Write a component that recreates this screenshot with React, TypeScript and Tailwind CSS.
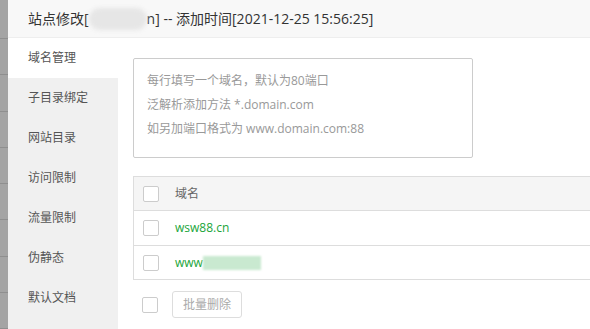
import React from "react";

const tabs = ["域名管理", "子目录绑定", "网站目录", "访问限制", "流量限制", "伪静态", "默认文档"];

function Checkbox() {
  return <span className="block w-4 h-4 border border-[#cccccc] rounded-[2px] bg-white shrink-0" />;
}

export default function App() {
  const font = { fontFamily: '"Open Sans", "Noto Sans CJK SC", sans-serif' };
  return (
    <div className="w-[590px] h-[329px] overflow-hidden flex bg-white" style={font}>
      {/* backdrop strip */}
      <div className="w-2 shrink-0 bg-[#a4a4a4] flex flex-col">
        <div className="h-[41px] border-b border-[#8f8f8f]" />
        {Array.from({ length: 8 }).map((_, i) => (
          <div key={i} className="h-[38px] border-b border-[#8f8f8f]" />
        ))}
      </div>

      <div className="flex-1 flex flex-col min-w-0">
        {/* Title */}
        <div className="h-[38px] shrink-0 bg-[#f8f8f8] border-b border-[#eeeeee] flex items-center pl-5 text-[14px] text-[#333333]">
          <span>站点修改[</span>
          <span className="w-[58px] h-[22px] bg-[#e6e6e6] blur-[2px] rounded-full" />
          <span>n] -- 添加时间[2021-12-25 15:56:25]</span>
        </div>

        <div className="flex flex-1 min-h-0">
          {/* Sidebar */}
          <div className="w-[110px] shrink-0 bg-[#f0f0f0] flex flex-col">
            {tabs.map((t, i) => (
              <div
                key={t}
                className={`h-10 shrink-0 flex items-center pl-5 text-[12px] text-[#555555] ${i === 0 ? "bg-white" : ""}`}
              >
                {t}
              </div>
            ))}
          </div>

          {/* Content */}
          <div className="flex-1 pl-[15px] pt-5">
            <div className="w-[340px] h-[100px] border border-[#cccccc] rounded-[2px] pl-[13px] pt-[10px] text-[12px] text-[#999999] leading-[24px]">
              <div>每行填写一个域名，默认为80端口</div>
              <div>泛解析添加方法 *.domain.com</div>
              <div>如另加端口格式为 www.domain.com:88</div>
            </div>

            <div className="mt-[18px] w-[480px] border border-[#dddddd] border-r-0">
              <div className="h-[34px] bg-[#f5f5f5] border-b border-[#dddddd] flex items-center pl-[9px] gap-4 text-[12px] text-[#666666]">
                <Checkbox />
                <span>域名</span>
              </div>
              <div className="h-[35px] border-b border-[#dddddd] flex items-center pl-[9px] gap-4 text-[12px] text-[#20a53a]">
                <Checkbox />
                <span>wsw88.cn</span>
              </div>
              <div className="h-[33px] flex items-center pl-[9px] gap-4 text-[12px] text-[#20a53a]">
                <Checkbox />
                <span className="flex items-center">
                  www
                  <span className="w-[58px] h-[14px] bg-[#c9e9d0] blur-[1px]" />
                </span>
              </div>
            </div>

            <div className="mt-[11px] flex items-center pl-[9px] gap-[14px]">
              <Checkbox />
              <button className="h-[27px] w-[70px] border border-[#dddddd] rounded-[3px] text-[12px] text-[#aaaaaa] bg-white">
                批量删除
              </button>
            </div>
          </div>
        </div>
      </div>
    </div>
  );
}
